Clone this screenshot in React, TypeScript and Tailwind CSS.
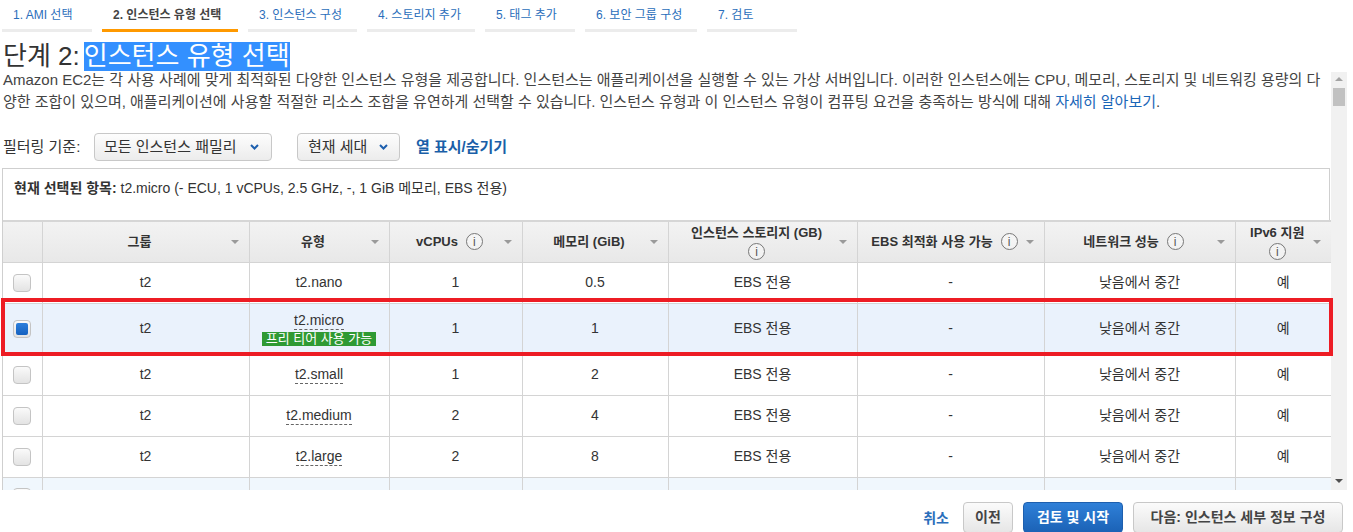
const tabs = [
  { label: '1. AMI 선택', w: 'w-[90px]' },
  { label: '2. 인스턴스 유형 선택', w: 'w-[136px]', active: true },
  { label: '3. 인스턴스 구성', w: 'w-[109px]' },
  { label: '4. 스토리지 추가', w: 'w-[108px]' },
  { label: '5. 태그 추가', w: 'w-[90px]' },
  { label: '6. 보안 그룹 구성', w: 'w-[112px]' },
  { label: '7. 검토', w: 'w-[90px]' },
];

const colWidths = [39, 207, 140, 133, 146, 189, 187, 191, 96];

const headers: { label: string; info?: boolean; twoLine?: boolean }[] = [
  { label: '그룹' },
  { label: '유형' },
  { label: 'vCPUs', info: true },
  { label: '메모리 (GiB)' },
  { label: '인스턴스 스토리지 (GB)', info: true, twoLine: true },
  { label: 'EBS 최적화 사용 가능', info: true },
  { label: '네트워크 성능', info: true },
  { label: 'IPv6 지원', info: true, twoLine: true },
];

const rows = [
  { type: 't2.nano', cpu: '1', mem: '0.5', dashed: false },
  { type: 't2.micro', cpu: '1', mem: '1', dashed: true, selected: true },
  { type: 't2.small', cpu: '1', mem: '2', dashed: true },
  { type: 't2.medium', cpu: '2', mem: '4', dashed: true },
  { type: 't2.large', cpu: '2', mem: '8', dashed: true },
];

function InfoIcon() {
  return (
    <span className="inline-flex h-[17px] w-[17px] shrink-0 items-center justify-center rounded-full border border-[#777] bg-white/40 text-[12px] font-normal leading-none text-[#555]">
      i
    </span>
  );
}

function Caret() {
  return <span className="h-0 w-0 shrink-0 border-x-[4px] border-t-[4px] border-x-transparent border-t-[#9a9a9a]" />;
}

function Chevron() {
  return (
    <svg width="9" height="6" viewBox="0 0 9 6" className="shrink-0">
      <polyline points="1,1 4.5,4.5 8,1" fill="none" stroke="#1d5fae" strokeWidth="2" />
    </svg>
  );
}

function Checkbox({ checked }: { checked?: boolean }) {
  return (
    <span className="mx-auto flex h-[18px] w-[18px] items-center justify-center rounded-[4px] border border-[#c4c4c4] bg-[linear-gradient(180deg,#fafafa,#e3e3e3)]">
      {checked && <span className="h-[12px] w-[12px] rounded-[2px] bg-[linear-gradient(180deg,#2f7fdb,#1561c0)]" />}
    </span>
  );
}

export default function App() {
  const cell = 'border-r border-b border-[#d4d4d4] text-center align-middle';
  return (
    <div className="relative h-[532px] w-[1353px] overflow-hidden bg-white font-['Liberation_Sans','Noto_Sans_CJK_KR',sans-serif] text-[#444]">
      {/* wizard steps */}
      <nav className="flex h-[32px] gap-[10px] pl-[2px]">
        {tabs.map((t) => (
          <div
            key={t.label}
            className={`${t.w} flex items-center border-b-[3px] pl-[11px] text-[12px] ${
              t.active ? 'border-[#f90] font-bold text-[#444]' : 'border-[#ececec] text-[#2a6ebb]'
            }`}
          >
            {t.label}
          </div>
        ))}
      </nav>

      <h1 className="h-[37px] pl-[3px] pt-[10px] text-[26px] font-normal leading-[29px] text-[#333]">
        단계 2:<span className="ml-[4px] inline-block bg-[#3390ff] text-white">인스턴스 유형 선택</span>
      </h1>

      <div className="flex">
        <div className="h-[421px] w-[1331px] overflow-hidden">
          <p className="whitespace-nowrap pl-[3px] text-[15px] leading-[22px] text-[#444]">
            Amazon EC2는 각 사용 사례에 맞게 최적화된 다양한 인스턴스 유형을 제공합니다. 인스턴스는 애플리케이션을 실행할 수 있는 가상 서버입니다. 이러한 인스턴스에는 CPU, 메모리, 스토리지 및 네트워킹 용량의 다
            <br />
            양한 조합이 있으며, 애플리케이션에 사용할 적절한 리소스 조합을 유연하게 선택할 수 있습니다. 인스턴스 유형과 이 인스턴스 유형이 컴퓨팅 요건을 충족하는 방식에 대해{' '}
            <span className="text-[#1a66b8]">자세히 알아보기</span>.
          </p>

          <div className="mt-[20px] flex h-[28px] items-center pl-[3px] text-[15px] text-[#333]">
            <span className="w-[91px]">필터링 기준:</span>
            <div className="flex h-[28px] w-[178px] items-center justify-between rounded-[4px] border border-[#c8c8c8] bg-[linear-gradient(180deg,#fdfdfd,#ececec)] pl-[9px] pr-[12px]">
              <span>모든 인스턴스 패밀리</span>
              <Chevron />
            </div>
            <div className="ml-[25px] flex h-[28px] w-[103px] items-center justify-between rounded-[4px] border border-[#c8c8c8] bg-[linear-gradient(180deg,#fdfdfd,#ececec)] pl-[10px] pr-[11px]">
              <span>현재 세대</span>
              <Chevron />
            </div>
            <span className="ml-[16px] font-bold text-[#1a5fa8]">열 표시/숨기기</span>
          </div>

          <div className="relative ml-[2px] mt-[7px] w-[1328px] border border-[#cfcfcf]">
            <div className="h-[51px] pl-[11px] pt-[9px] text-[14px] leading-[20px] text-[#333]">
              <span className="font-bold">현재 선택된 항목:</span> t2.micro (- ECU, 1 vCPUs, 2.5 GHz, -, 1 GiB 메모리, EBS 전용)
            </div>

            <table className="w-full table-fixed border-collapse border-t-2 border-[#d6d6d6] text-[14px] text-[#333]">
              <colgroup>
                {colWidths.map((w, i) => (
                  <col key={i} style={{ width: w }} />
                ))}
              </colgroup>
              <thead>
                <tr className="h-[41px] bg-[linear-gradient(180deg,#f3f3f3,#e8e8e8)] text-[13px]">
                  <th className="border-r border-b border-[#d4d4d4]" />
                  {headers.map((h, i) => (
                    <th key={h.label} className={`border-b border-[#d4d4d4] p-0 ${i < headers.length - 1 ? 'border-r' : ''}`}>
                      <div className="flex items-center pr-[10px]">
                        {h.twoLine ? (
                          <div className="flex flex-1 flex-col items-center gap-[1px] pl-[6px] leading-[19px]">
                            <span>{h.label}</span>
                            <InfoIcon />
                          </div>
                        ) : (
                          <div className="flex flex-1 items-center justify-center gap-[8px] pl-[6px]">
                            <span>{h.label}</span>
                            {h.info && <InfoIcon />}
                          </div>
                        )}
                        <Caret />
                      </div>
                    </th>
                  ))}
                </tr>
              </thead>
              <tbody>
                {rows.map((r) => (
                  <tr key={r.type} className={r.selected ? 'h-[51px] bg-[#eaf2fc]' : 'h-[41px] bg-white'}>
                    <td className={cell}>
                      <Checkbox checked={r.selected} />
                    </td>
                    <td className={cell}>t2</td>
                    <td className={cell}>
                      <div className="flex flex-col items-center">
                        <span className={r.dashed ? 'border-b border-dashed border-[#666] leading-[17px]' : 'leading-[17px]'}>{r.type}</span>
                        {r.selected && (
                          <span className="mt-[2px] bg-[#2f9a33] px-[4px] text-[13px] leading-[14px] text-white">프리 티어 사용 가능</span>
                        )}
                      </div>
                    </td>
                    <td className={cell}>{r.cpu}</td>
                    <td className={cell}>{r.mem}</td>
                    <td className={cell}>EBS 전용</td>
                    <td className={cell}>-</td>
                    <td className={cell}>낮음에서 중간</td>
                    <td className="border-b border-[#d4d4d4] text-center align-middle">예</td>
                  </tr>
                ))}
                {/* next row, only its top shows above the fold */}
                <tr className="h-[41px] bg-[#f0f7fd]">
                  <td className={`${cell} align-top pt-[10px]`}>
                    <Checkbox />
                  </td>
                  <td className={cell} />
                  <td className={cell} />
                  <td className={cell} />
                  <td className={cell} />
                  <td className={cell} />
                  <td className={cell} />
                  <td className={cell} />
                  <td className="border-b border-[#d4d4d4]" />
                </tr>
              </tbody>
            </table>
          </div>
        </div>

        {/* scrollbar */}
        <div className="mt-[3px] flex h-[418px] w-[16px] flex-col items-center bg-[#f1f1f1]">
          <span className="mt-[5px] h-0 w-0 border-x-[4px] border-b-[4px] border-x-transparent border-b-[#a3a3a3]" />
          <span className="mt-[7px] h-[18px] w-[12px] bg-[#c1c1c1]" />
          <span className="flex-1" />
          <span className="mb-[7px] h-0 w-0 border-x-[4px] border-t-[4px] border-x-transparent border-t-[#505050]" />
        </div>
      </div>

      {/* footer */}
      <div className="flex h-[42px] items-start justify-end gap-[10px] pr-[10px] pt-[12px] text-[14px] font-bold">
        <span className="mr-[4px] mt-[6px] text-[#2a6ebb]">취소</span>
        <button type="button" className="h-[31px] w-[50px] rounded-[4px] border border-[#c8c8c8] bg-[linear-gradient(180deg,#fbfbfb,#e6e6e6)] text-[#444]">
          이전
        </button>
        <button type="button" className="h-[31px] w-[100px] rounded-[4px] border border-[#1d5fae] bg-[linear-gradient(180deg,#2f80d8,#1b62b6)] text-white">
          검토 및 시작
        </button>
        <button type="button" className="h-[31px] w-[210px] rounded-[4px] border border-[#c8c8c8] bg-[linear-gradient(180deg,#fbfbfb,#e6e6e6)] text-[#444]">
          다음: 인스턴스 세부 정보 구성
        </button>
      </div>

      {/* red annotation box */}
      <div className="pointer-events-none absolute left-[1px] top-[298px] h-[58px] w-[1332px] border-[4px] border-[#ed1c24]" />
    </div>
  );
}
